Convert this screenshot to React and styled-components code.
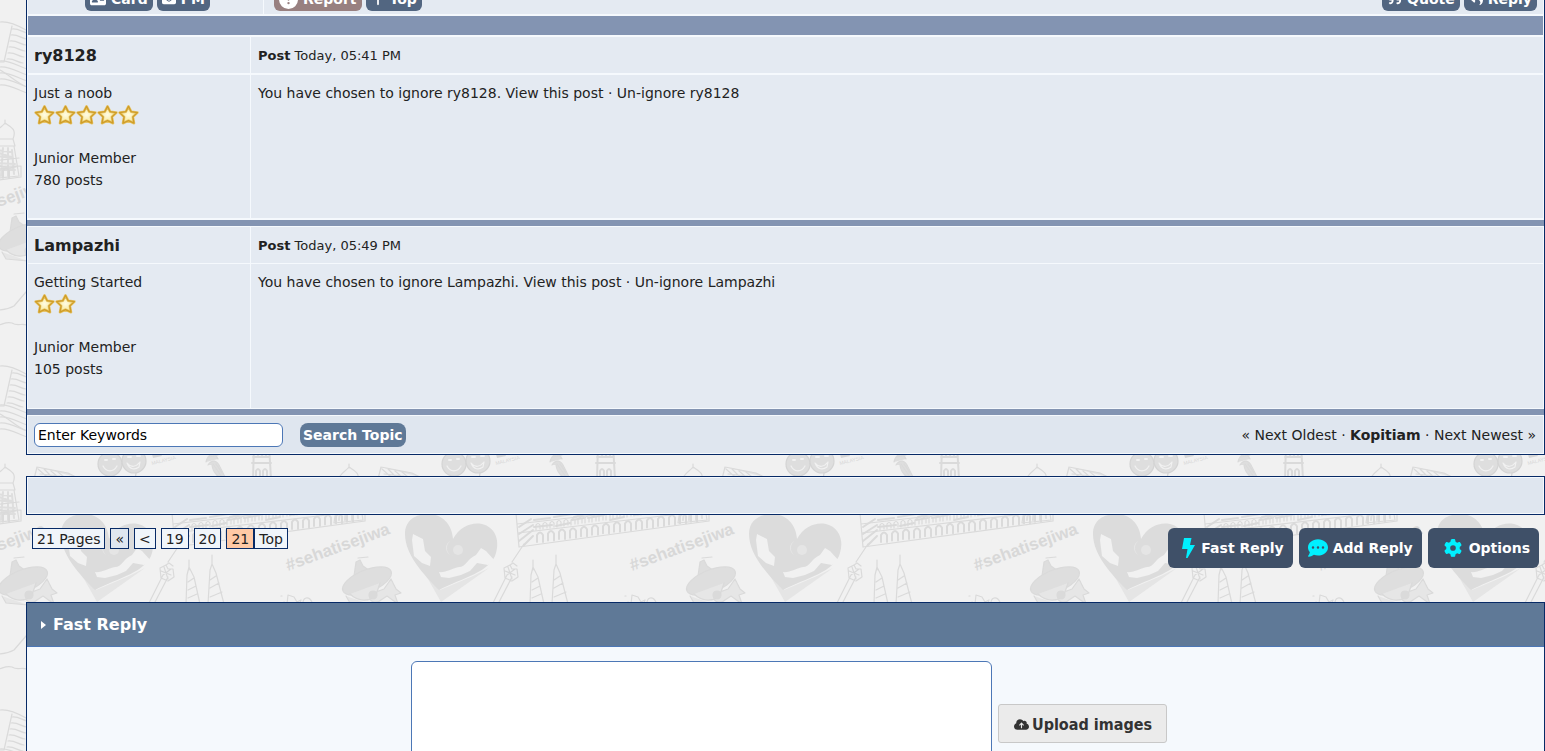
import React from 'react';
import styled, { createGlobalStyle } from 'styled-components';
import {
  FaAddressCard, FaEnvelope, FaCircleExclamation, FaArrowUp, FaQuoteRight,
  FaReply, FaCommentDots, FaGear, FaCloudArrowUp,
} from 'react-icons/fa6';

const GlobalStyle = createGlobalStyle`
  * { box-sizing: border-box; }
  body {
    margin: 0;
    background: #f1f1f1;
    color: #222;
    font: 14px/22px Verdana, "DejaVu Sans", sans-serif;
  }
  a { color: inherit; text-decoration: none; }
  button, input, textarea { font: inherit; margin: 0; }
`;

const Page = styled.main`
  position: relative;
  z-index: 0;
  height: 100vh;
  overflow: hidden;
  padding-left: 26px;
`;

const Doodles = styled.svg`
  position: absolute;
  inset: 0;
  z-index: -1;
  width: 100%;
  height: 100%;
`;

const Panel = styled.section`
  border: 1px solid #072a66;
  border-top-width: ${(p) => (p.$open ? 0 : 1)}px;
  background: #f5f9fd;
  margin-bottom: ${(p) => p.$space || 0}px;
`;

const Toolbar = styled.div`
  display: grid;
  grid-template-columns: 235px 1fr;
  gap: 1px;
  height: 14px;
  margin: 0 1px;
`;

const ToolCell = styled.div`
  display: flex;
  align-items: flex-end;
  gap: 4px;
  padding: 0 6px 3px ${(p) => p.$indent}px;
  background: #e4eaf2;
  overflow: hidden;
`;

const ToolButton = styled.button`
  display: flex;
  align-items: center;
  flex: none;
  gap: 5px;
  height: 24px;
  padding: 0 5px;
  border: 0;
  border-radius: 6px;
  background: ${(p) => (p.$alert ? '#988080' : '#526681')};
  color: #fff;
  font-weight: bold;
  font-size: 14px;
`;

const Spacer = styled.span`
  flex: 1;
`;

const Bar = styled.div`
  height: ${(p) => p.$size}px;
  margin: ${(p) => (p.$inset ? '2px 1px 0' : '0')};
  background: #8394b2;
`;

const PostGrid = styled.article`
  display: grid;
  grid-template-columns: 222px 1fr;
  grid-template-rows: 36px ${(p) => 145 - p.$line}px;
  column-gap: 1px;
  row-gap: ${(p) => p.$line}px;
  padding: ${(p) => p.$line}px 1px;
`;

const Cell = styled.div`
  padding: ${(p) => (p.$head ? 8 : 7)}px 7px;
  background: #e4eaf2;
  font-size: ${(p) => (p.$small ? 13 : 14)}px;
  &:nth-child(odd) { padding-left: 6px; }
`;

const Name = styled.a`
  font-size: 16px;
  font-weight: bold;
`;

const Stars = styled.div`
  display: flex;
  height: 22px;
  margin-bottom: 21px;
`;

const TopicFooter = styled.form`
  display: flex;
  align-items: center;
  height: 37px;
  margin: 1px 1px;
  padding: 0 7px 0 6px;
  background: #dfe6ef;
`;

const Keywords = styled.input`
  width: 249px;
  height: 24px;
  padding: 0 3px;
  border: 1px solid #4c77b6;
  border-radius: 6px;
  background: #fff;
  color: #000;
`;

const SearchButton = styled.button`
  height: 24px;
  margin-left: 17px;
  padding: 0 3px;
  border: 0;
  border-radius: 8px;
  background: #5f7997;
  color: #fff;
  font-weight: bold;
`;

const EmptyStrip = styled.div`
  height: 35px;
  margin: 1px;
  background: #dfe6ef;
`;

const Actions = styled.div`
  display: flex;
  justify-content: space-between;
  align-items: flex-start;
  height: 87px;
  padding: 13px 6px 0;
`;

const Pages = styled.nav`
  display: flex;
  gap: 5px;
`;

const PageGroup = styled.span`
  display: flex;
`;

const PageLink = styled.a`
  height: 21px;
  padding: 0 4px;
  border: 1px solid #072a66;
  background: ${(p) => p.$fill || '#f0f5fa'};
  line-height: 20px;
`;

const BigButtons = styled.div`
  display: flex;
  gap: 6px;
`;

const BigButton = styled.button`
  display: flex;
  align-items: center;
  gap: ${(p) => p.$gap}px;
  height: 40px;
  padding: 0 9px 0 ${(p) => p.$lead}px;
  border: 0;
  border-radius: 6px;
  background: #3f5068;
  color: #fff;
  font-weight: bold;
  svg { color: #00f0ff; flex: none; }
`;

const PanelTitle = styled.h2`
  display: flex;
  align-items: center;
  gap: 7px;
  height: 44px;
  margin: 0;
  padding: 0 14px;
  border-bottom: 1px solid #4c77b6;
  background: #5f7997;
  color: #fff;
  font-size: 16px;
`;

const ReplyForm = styled.form`
  display: flex;
  justify-content: center;
  align-items: center;
  gap: 6px;
  padding: 14px 0 14px 7px;
`;

const ReplyBox = styled.textarea`
  width: 581px;
  height: 124px;
  border: 1px solid #4c77b6;
  border-radius: 6px;
  background: #fff;
  resize: none;
`;

const UploadButton = styled.button`
  display: flex;
  align-items: center;
  gap: 3px;
  height: 39px;
  padding: 2px 14px 0 15px;
  border: 1px solid #c8c8c8;
  border-radius: 3px;
  background: #ebebeb;
  color: #333;
  font: bold 16px Tahoma, "DejaVu Sans Condensed", sans-serif;
`;

const TILE = 344;

function Motif() {
  return (
    <g id="motif" fill="none" stroke="#dadada" strokeWidth="1.2" strokeLinejoin="round" strokeLinecap="round">
      {/* pair of smiling faces */}
      <g fill="#dedede" stroke="#d4d4d4">
        <circle cx="110" cy="464" r="12" />
        <circle cx="134" cy="461" r="12" />
        <path d="M113 476l2 14M136 473l-2 15" />
      </g>
      <g stroke="#f1f1f1">
        <path d="M103 466c3 6 10 7 14 0M127 463c4 5 9 4 13-1l-1 5c-4 3-9 3-12-4" />
        <path d="M105 460h2M113 459h2M128 457h3M137 456h3" strokeWidth="2" />
      </g>
      <g stroke="none" fill="#d6d6d6">
        <path d="M150 447l3 11 9-2-1-2-6 1-2-9zM164 445l3 9 10-3-1-2-7 2-2-7z" />
        <text x="152" y="465" fontFamily="Liberation Sans" fontSize="5" transform="rotate(-14 152 465)">MALAYSIA</text>
      </g>
      {/* hornbill */}
      <path d="M206 462c2-9 9-10 12-3M208 465c4-6 9-5 12 2l6 12c-7 0-13-6-14-14" fill="#dedede" />
      <path d="M213 464l9 13M216 464l6 9M209 457l9-2" />
      {/* clock tower */}
      <path d="M254 445h15l2 34h-18zM253 457h17M252 463h19M256 478v-7q2-4 4 0v7M263 478v-7q2-4 4 0v7M258 448v7M262 447v8M266 447v8" strokeWidth="2" />
      {/* long roof corner */}
      <path d="M37 467l-3 12M37 467l31 6 8 4M38 469l9 8M44 469l8 8M51 471l7 6M58 472l6 5M40 474l20 2" fill="#e2e2e2" />
      {/* domed minaret */}
      <path d="M349 468v-4M340 482c-3-7 5-10 9-15 6 4 12 6 8 16l2 7h-21zM339 490l-5 33 29-3-5-30M340 483h17" />
      <path d="M341 494l14 2M339 500l18 2M338 507l21 1M337 514l22 0M342 492l-3 28M347 492l-2 28M352 492v28M356 494l2 24M343 497l12 4M341 509l17 5" strokeWidth="2" stroke="#dedede" />
      {/* tilted palace facade */}
      <path d="M172 513l3 34 190-26v-11zM173 524l190-22M174 533l186-22" />
      <path
        d="M175 541l14-11M175 534l14-9M175 527l12-8M180 545l9-9M190 520l16-2M210 517l18-3M230 517l12-3M190 527l18-2M212 526l14-3M228 520l12-2M244 518l16-3M266 520l14-3M290 515l16-2"
        strokeWidth="2"
      />
      {Array.from({ length: 15 }, (_, i) => (
        <path key={i} strokeWidth="2" d={`M${193 + i * 11} ${542 - i * 1.45}v-7q3-5 6 0v7`} />
      ))}
      {Array.from({ length: 16 }, (_, i) => (
        <path key={i} d={`M${192 + i * 7} ${530 - i}v-5q2-3 4 0v4`} />
      ))}
      {/* heart with map and ribbon */}
      <g stroke="none">
        <path d="M62 540l35 62 48-34-16 8-33 14z" fill="#e5e5e5" />
        <path d="M95 590C80 575 61 555 61 534c0-14 11-20 23-20 14 0 24 10 25 25 7-13 19-17 29-15 13 3 18 16 14 29-5 19-34 25-57 37z" fill="#dcdcdc" />
        <path d="M68 540l1-6 10 5 2 12 6 6-1 9-8-3-8-7zM95 572c6 1 14-4 20-5 7 0 8-8 17-12l5-7 5 3 10 11-8 3-11-2-7 8-9 4-12 3-8-1z" fill="#f1f1f1" />
        <path d="M109 540a8 8 0 1 0 2 16 7 8 0 1 1-2-16" fill="#e5e5e5" />
        <circle cx="114" cy="550" r="5" fill="#e5e5e5" />
      </g>
      <text
        x="288" y="571" transform="rotate(-20 288 571)" stroke="none" fill="#d8d8d8"
        fontFamily="Liberation Sans" fontSize="17" fontWeight="bold"
      >#sehatisejiwa</text>
      {/* dancer with wide hat */}
      <path d="M354 576l2-14 4-2 3 6 7 5z" fill="#dedede" />
      <ellipse cx="367" cy="581" rx="26" ry="11" transform="rotate(-22 367 581)" fill="#dedede" />
      <path d="M358 558l10-1M350 594c8 8 20 8 26 1l4-12M391 579l5 10 5 4-6 2 3 9-11-8-6 4c-4 4-13 2-11-4l6-4 8-3zM346 596l4 7 22 2" fill="#e6e6e6" />
      <circle cx="373" cy="595" r="4" fill="#dadada" />
      {/* flower stalk */}
      <path d="M163 575l-14 28M168 577l-14 27M160 568l6-3 2 4 5 0 1 8-6 4-7-3zM163 575l8-6M166 565l3-2 4 3M168 562l12-18M161 571l10 4M164 567l4 12" />
      {/* twin towers */}
      <path d="M186 604l1-29 2-8 5 10 6 27M208 604l2-34 2-6 4 9 8 31M189 560v10M212 555v10M188 582l6-4M188 590l8-4M188 598l9-4M210 580l6-4M210 588l9-5M210 597l12-5" />
      {/* flower line drawing */}
      <path d="M281 596h1M287 604l1-9 6 2 3 5 4-2-2 6M303 602c1-5 6-6 9 0l3 4M284 602l4 2" />
      {/* coast lines and open book */}
      <path d="M311 654c15-3 33 4 47-4l12-14 10-14M334 669c12 2 13-4 22-2 6 4 11-1 17 3" />
      <path d="M344 366c8-1 19 4 26 8M356 370l-8 36M344 406l3 0M344 414c8 4 18 14 27 17" />
      {Array.from({ length: 6 }, (_, i) => (
        <path key={i} d={`M${356 - i} ${373 + i * 6}c7-1 11 4 16 4`} />
      ))}
      {Array.from({ length: 5 }, (_, i) => (
        <path key={i} d={`M344 ${405 + i * 6}c9-1 18 5 27 8`} />
      ))}
    </g>
  );
}

function Background() {
  const offsets = [];
  for (let row = -2; row <= 1; row += 1) {
    for (let col = -1; col <= 4; col += 1) offsets.push([col * TILE, row * TILE]);
  }
  return (
    <Doodles aria-hidden="true">
      <defs><Motif /></defs>
      {offsets.map(([x, y]) => <use key={`${x},${y}`} href="#motif" x={x} y={y} />)}
    </Doodles>
  );
}

function Star() {
  return (
    <svg width="21" height="22" viewBox="0 0 21 22" aria-hidden="true">
      <defs>
        <radialGradient id="starFill">
          <stop offset="0" stopColor="#fffce6" />
          <stop offset="1" stopColor="#f7e68c" />
        </radialGradient>
      </defs>
      <path
        d="M10.500 2.400l2.700 5.300 6.200.9-4.500 4.300 1.100 6.300-5.500-2.600L5 19.200l1.100-6.300L1.600 8.600l6.200-.9z"
        fill="url(#starFill)" stroke="#e6c469" strokeWidth="2.600" strokeLinejoin="round"
      />
      <path
        d="M10.500 2.400l2.700 5.300 6.200.9-4.500 4.300 1.100 6.300-5.500-2.600L5 19.200l1.100-6.300L1.600 8.600l6.200-.9z"
        fill="none" stroke="#cf9d28" strokeWidth="1.300" strokeLinejoin="round"
      />
    </svg>
  );
}

function Bolt() {
  return (
    <svg width="13" height="20" viewBox="0 0 13 20" aria-hidden="true">
      <path d="M2 0h7.500L8 7h5L5.500 20H4l1.500-9H0z" fill="currentColor" />
    </svg>
  );
}

function Post({ name, title, stars, posts, time, line }) {
  return (
    <PostGrid $line={line}>
      <Cell $head><Name href="#profile">{name}</Name></Cell>
      <Cell $head $small><b>Post</b> Today, {time}</Cell>
      <Cell>
        {title}
        <Stars>{Array.from({ length: stars }, (_, i) => <Star key={i} />)}</Stars>
        Junior Member<br />
        {posts} posts
      </Cell>
      <Cell>
        You have chosen to ignore {name}. <a href="#view">View this post</a> · <a href="#unignore">Un-ignore {name}</a>
      </Cell>
    </PostGrid>
  );
}

export default function App() {
  return (
    <Page>
      <GlobalStyle />
      <Background />
      <Panel $open $space={21}>
        <Toolbar>
          <ToolCell $indent={57}>
            <ToolButton><FaAddressCard size={16} />Card</ToolButton>
            <ToolButton><FaEnvelope size={14} />PM</ToolButton>
          </ToolCell>
          <ToolCell $indent={10}>
            <ToolButton $alert><FaCircleExclamation size={19} />Report</ToolButton>
            <ToolButton><FaArrowUp size={14} />Top</ToolButton>
            <Spacer />
            <ToolButton><FaQuoteRight size={15} />Quote</ToolButton>
            <ToolButton><FaReply size={14} />Reply</ToolButton>
          </ToolCell>
        </Toolbar>
        <Bar $size={19} $inset />
        <Post name="ry8128" title="Just a noob" stars={5} posts={780} time="05:41 PM" line={2} />
        <Bar $size={6} />
        <Post name="Lampazhi" title="Getting Started" stars={2} posts={105} time="05:49 PM" line={1} />
        <Bar $size={6} />
        <TopicFooter>
          <Keywords aria-label="Search keywords" defaultValue="Enter Keywords" />
          <SearchButton type="button">Search Topic</SearchButton>
          <Spacer />
          <span>
            « <a href="#older">Next Oldest</a> · <a href="#kopitiam"><b>Kopitiam</b></a> · <a href="#newer">Next Newest</a> »
          </span>
        </TopicFooter>
      </Panel>
      <Panel><EmptyStrip /></Panel>
      <Actions>
        <Pages aria-label="Pages">
          <PageLink href="#pages">21 Pages</PageLink>
          <PageLink href="#first" $fill="#dfe6ef">«</PageLink>
          <PageLink href="#prev">&lt;</PageLink>
          <PageLink href="#p19">19</PageLink>
          <PageLink href="#p20">20</PageLink>
          <PageGroup>
            <PageLink href="#p21" $fill="#ffc9a5">21</PageLink>
            <PageLink href="#top">Top</PageLink>
          </PageGroup>
        </Pages>
        <BigButtons>
          <BigButton $lead={14} $gap={6}><Bolt />Fast Reply</BigButton>
          <BigButton $lead={9} $gap={5}><FaCommentDots size={20} />Add Reply</BigButton>
          <BigButton $lead={16} $gap={7}><FaGear size={18} />Options</BigButton>
        </BigButtons>
      </Actions>
      <Panel>
        <PanelTitle>
          <svg width="5" height="8" viewBox="0 0 5 8" aria-hidden="true"><path d="M0 0l5 4-5 4z" fill="#fff" /></svg>
          Fast Reply
        </PanelTitle>
        <ReplyForm>
          <ReplyBox aria-label="Reply text" />
          <UploadButton type="button"><FaCloudArrowUp size={15} />Upload images</UploadButton>
        </ReplyForm>
      </Panel>
    </Page>
  );
}
